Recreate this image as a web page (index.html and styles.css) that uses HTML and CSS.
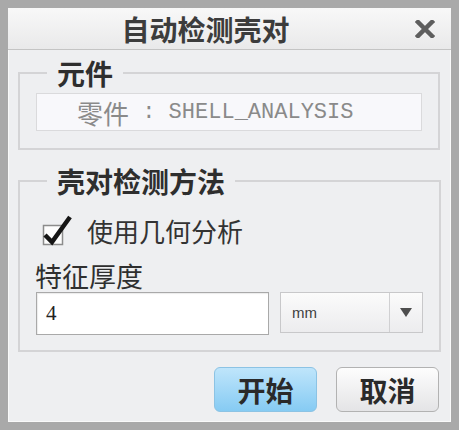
FILE: index.html
```html
<!DOCTYPE html>
<html lang="zh">
<head>
    <meta charset="UTF-8">
    <title>自动检测壳对</title>
    <link rel="stylesheet" href="styles.css">
</head>
<body>

<div class="window">
    <div class="titlebar">
        <div class="title">自动检测壳对</div>
        <div class="close">
            <svg width="20" height="18" viewBox="0 0 20 18">
                <path d="M3 2 L17 16 M17 2 L3 16" stroke="#5e5e5e" stroke-width="4.5" stroke-linecap="square"/>
            </svg>
        </div>
    </div>

    <div class="content">
        <fieldset class="group">
            <legend>元件</legend>
            <div class="part-field">
                <span class="cjk">零件</span><span class="mono"> : SHELL_ANALYSIS</span>
            </div>
        </fieldset>

        <fieldset class="group">
            <legend>壳对检测方法</legend>
            <div class="check-row">
                <svg class="checkbox" width="30" height="32" viewBox="0 0 30 32">
                    <rect x="1.5" y="11.5" width="19" height="19" fill="#fdfdfd" stroke="#8c8c8c" stroke-width="1.5"/>
                    <path d="M3 21 L10 28 L28 3" fill="none" stroke="#151515" stroke-width="4.5" stroke-linejoin="miter"/>
                </svg>
                <span class="check-label">使用几何分析</span>
            </div>
            <div class="field-label">特征厚度</div>
            <div class="input-row">
                <div class="text-input">4</div>
                <div class="select">
                    <span class="select-value">mm</span>
                    <span class="select-arrow">
                        <svg width="12" height="9" viewBox="0 0 12 9"><path d="M0 0 H12 L6 9 Z" fill="#4e4e4e"/></svg>
                    </span>
                </div>
            </div>
        </fieldset>

        <div class="buttons">
            <button class="btn btn-primary">开始</button>
            <button class="btn">取消</button>
        </div>
    </div>
</div>

</body>
</html>
```

FILE: styles.css
```css
* {
    margin: 0;
    padding: 0;
    box-sizing: border-box;
}

body {
    font-family: "Noto Sans CJK SC", "Noto Sans", sans-serif;
    background-color: #ffffff;
}

.window {
    width: 459px;
    height: 430px;
    border: 8px solid #a9a9a9;
    background: #eeeff1;
    box-shadow: inset 0 0 0 1px #f9f9f9;
    display: flex;
    flex-direction: column;
}

/* Title bar */
.titlebar {
    height: 42px;
    display: flex;
    align-items: center;
    background: linear-gradient(#f8f8f8, #e9e9ea);
    border-bottom: 1px solid #c4c4c4;
}

.title {
    flex: 1;
    text-align: center;
    font-size: 28px;
    font-weight: bold;
    color: #3c3c3c;
    line-height: 30px;
}

.close {
    width: 48px;
    display: flex;
    justify-content: center;
    padding-right: 4px;
}

.content {
    padding: 8px 11px 0 10px;
}

/* Groups */
.group {
    border: 2px solid #d4d4d6;
    padding: 5px 16px 17px 16px;
}

.group + .group {
    margin-top: 16px;
    padding-bottom: 15px;
}

.group legend {
    font-size: 28px;
    font-weight: bold;
    line-height: 30px;
    color: #2e2e2e;
    padding: 0 10px;
    margin-left: 11px;
}

.part-field {
    height: 38px;
    border: 1px solid #dadadc;
    background: #f8f8fb;
    color: #8a8a8a;
    display: flex;
    align-items: center;
    padding-left: 40px;
}

.part-field .cjk {
    font-size: 26px;
}

.part-field .mono {
    font-family: "Liberation Mono", monospace;
    font-size: 22px;
    white-space: pre;
}

.check-row {
    display: flex;
    align-items: center;
    height: 32px;
    margin-top: 13px;
    padding-left: 6px;
}

.check-label {
    margin-left: 15px;
    font-size: 26px;
    color: #333;
}

.field-label {
    margin-top: 15px;
    font-size: 27px;
    line-height: 30px;
    color: #2f2f2f;
    margin-left: -1px;
}

.input-row {
    display: flex;
    gap: 11px;
    margin-top: 1px;
}

.text-input {
    width: 233px;
    height: 43px;
    background: #fff;
    border: 1px solid #a9a9a9;
    box-shadow: inset 1px 1px 1px rgba(0, 0, 0, 0.08);
    font-family: "Liberation Serif", serif;
    font-size: 21px;
    color: #222;
    padding-left: 9px;
    display: flex;
    align-items: center;
}

.select {
    width: 143px;
    height: 41px;
    border: 1px solid #c8c8ca;
    background: linear-gradient(#fbfbfb, #ececee);
    display: flex;
}

.select-value {
    flex: 1;
    display: flex;
    align-items: center;
    padding-left: 11px;
    font-family: "Liberation Sans", sans-serif;
    font-size: 15px;
    color: #404040;
}

.select-arrow {
    width: 33px;
    border-left: 1px solid #d0d0d2;
    display: flex;
    align-items: center;
    justify-content: center;
}

/* Buttons */
.buttons {
    display: flex;
    justify-content: flex-end;
    gap: 19px;
    margin-top: 15px;
    padding-right: 1px;
}

.btn {
    width: 103px;
    height: 45px;
    border: 1px solid #b2b2b2;
    border-radius: 6px;
    background: linear-gradient(#fdfdfd, #e4e4e6);
    font-family: "Noto Sans CJK SC", sans-serif;
    font-size: 28px;
    font-weight: bold;
    color: #2a2a2a;
    cursor: pointer;
}

.btn-primary {
    border-color: #8cc3e4;
    background: linear-gradient(#bfe5fb, #86cbf3);
}
```
